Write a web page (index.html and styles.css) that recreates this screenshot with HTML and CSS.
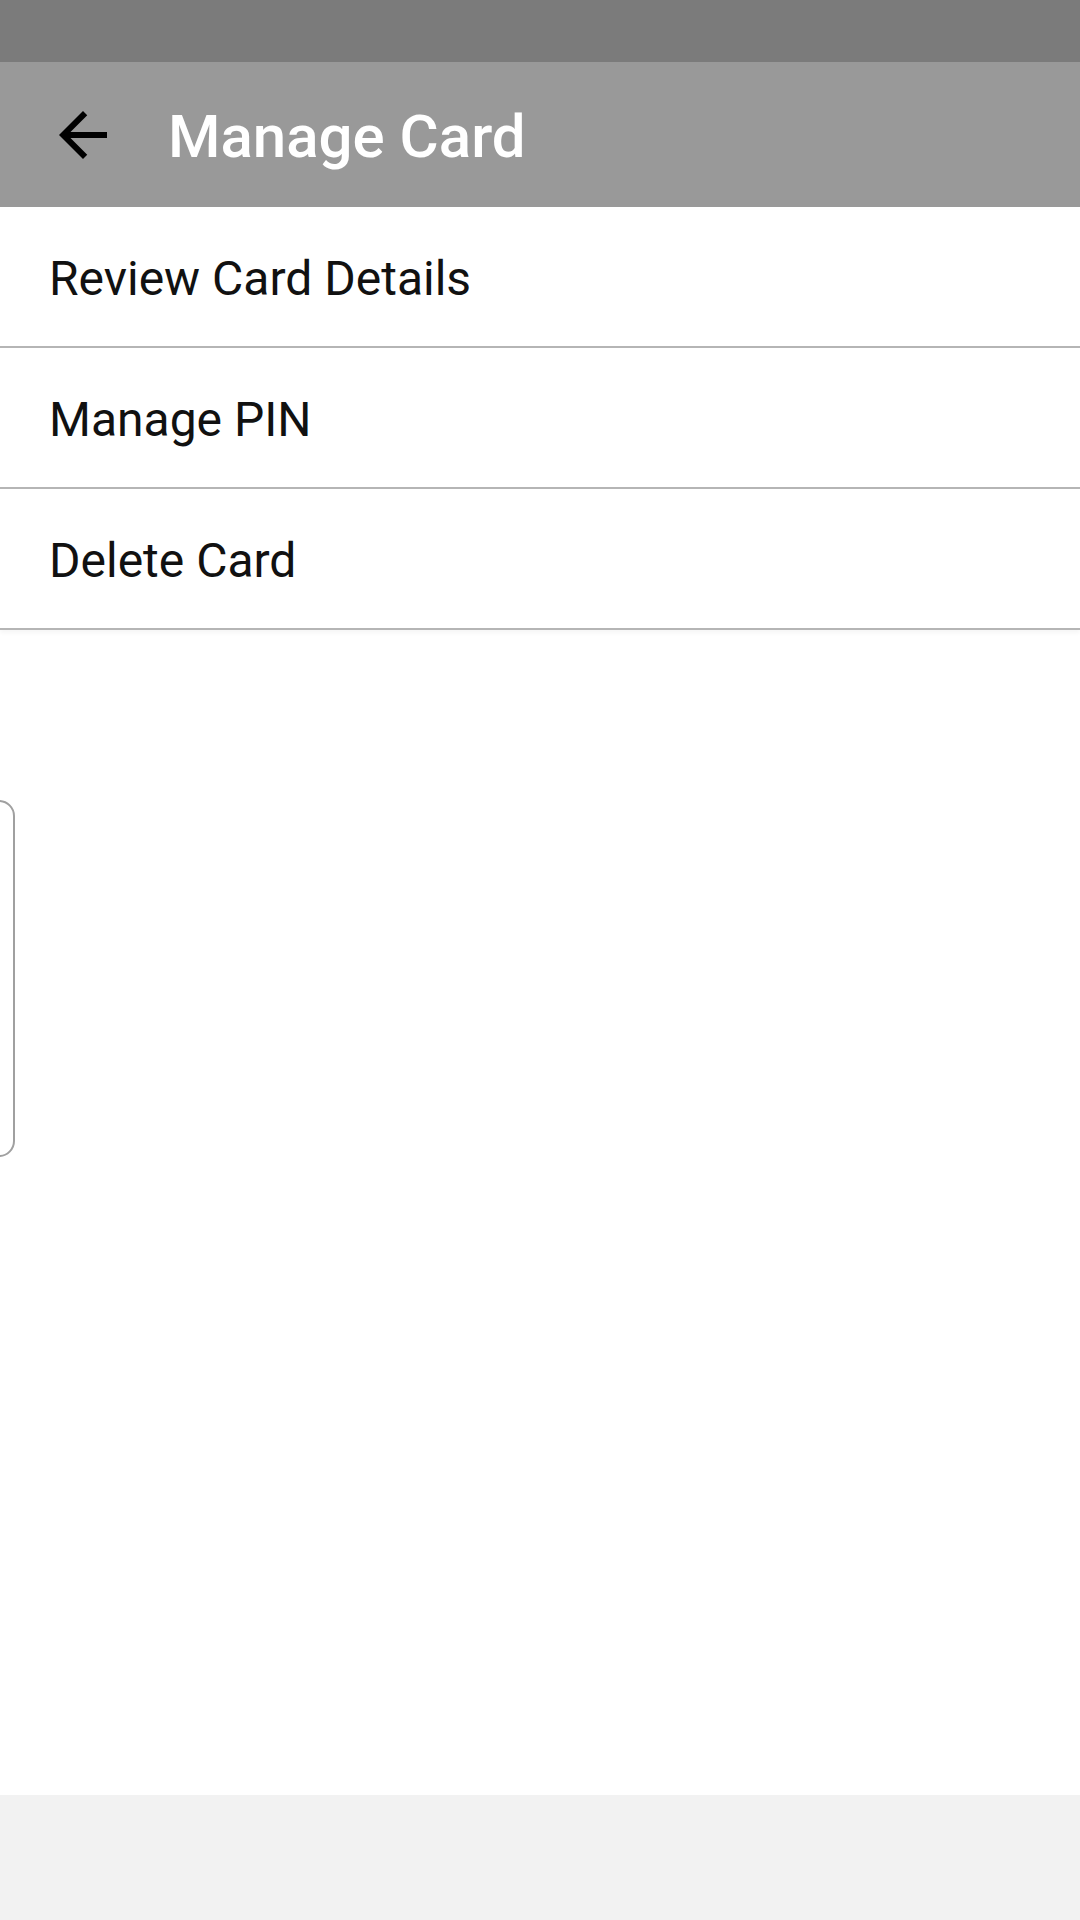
FILE: index.html
```html
<!DOCTYPE html>
<html lang="en">
<head>
<meta charset="utf-8">
<title>Manage Card</title>
<link rel="stylesheet" href="styles.css">
</head>
<body>
<div class="screen">
  <div class="status-bar"></div>
  <header class="app-bar">
    <button class="back" aria-label="Back">
      <svg viewBox="0 0 24 24" width="72" height="72"><path d="M20 11H7.83l5.59-5.59L12 4l-8 8 8 8 1.41-1.41L7.83 13H20v-2z" fill="#000"/></svg>
    </button>
    <h1 class="title">Manage Card</h1>
  </header>
  <main class="content">
    <ul class="menu">
      <li class="menu-item">Review Card Details</li>
      <li class="menu-item">Manage PIN</li>
      <li class="menu-item">Delete Card</li>
    </ul>
    <div class="card-peek"></div>
  </main>
  <footer class="nav-bar"></footer>
</div>
</body>
</html>
```
FILE: styles.css
```css
html, body {
  margin: 0;
  padding: 0;
  background: #ffffff;
}
body {
  font-family: Roboto, "Noto Sans", "Liberation Sans", sans-serif;
}
.screen {
  width: 1080px;
  min-height: 1920px;
  display: flex;
  flex-direction: column;
}
.status-bar {
  height: 62px;
  background: #7b7b7b;
}
.app-bar {
  height: 145px;
  background: #999999;
  display: flex;
  align-items: center;
}
.back {
  width: 72px;
  height: 72px;
  margin-left: 47px;
  padding: 0;
  border: 0;
  background: transparent;
  display: flex;
}
.title {
  margin: 5px 0 0 49px;
  font-size: 60px;
  font-weight: 500;
  color: #ffffff;
  line-height: 1;
}
.content {
  flex: 1;
  position: relative;
}
.menu {
  list-style: none;
  margin: 0;
  padding: 0;
  box-shadow: 0 3px 4px rgba(0,0,0,0.04);
}
.menu-item {
  height: 135px;
  padding-top: 4px;
  border-bottom: 2px solid #b5b5b5;
  display: flex;
  align-items: center;
  padding-left: 49px;
  font-size: 48px;
  color: #111111;
}
.card-peek {
  position: absolute;
  top: 593px;
  left: -40px;
  width: 51px;
  height: 353px;
  border: 2px solid #a0a0a0;
  border-radius: 16px;
}
.nav-bar {
  height: 125px;
  background: #f2f2f2;
}
```
